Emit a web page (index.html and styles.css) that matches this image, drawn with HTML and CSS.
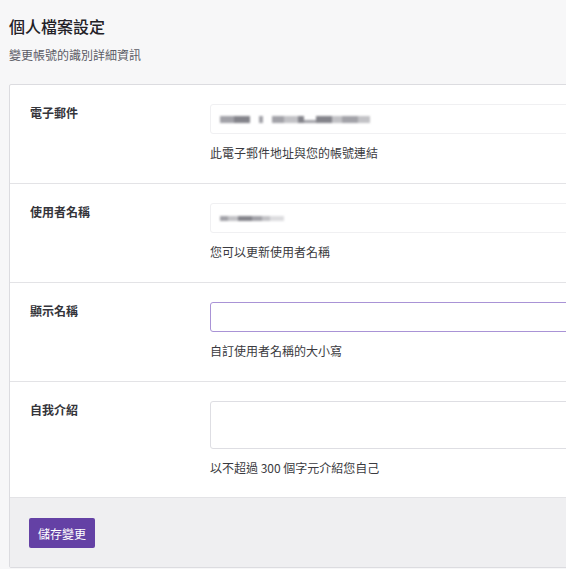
FILE: index.html
```html
<!DOCTYPE html>
<html lang="zh-Hant">
<head>
<meta charset="utf-8">
<title>個人檔案設定</title>
<link rel="stylesheet" href="styles.css">
</head>
<body>
  <main class="page">
    <h1 class="title">個人檔案設定</h1>
    <p class="subtitle">變更帳號的識別詳細資訊</p>

    <section class="card">
      <div class="row">
        <div class="label">電子郵件</div>
        <div class="field">
          <div class="input input-locked">
            <span class="masked">
              <i class="blk w14"></i><i class="blk w16 dark"></i><i class="gap"></i><i class="blk w4"></i><i class="gap"></i><i class="blk w12"></i><i class="blk w14 light"></i><i class="blk w6 dark"></i><i class="blk w12 low"></i><i class="blk w16 dark"></i><i class="blk w10 light"></i><i class="blk w16"></i><i class="blk w12 light"></i>
            </span>
          </div>
          <p class="help">此電子郵件地址與您的帳號連結</p>
        </div>
      </div>

      <div class="row">
        <div class="label">使用者名稱</div>
        <div class="field">
          <div class="input input-locked">
            <span class="masked small">
              <i class="blk w8"></i><i class="blk w10 light"></i><i class="blk w14 dark"></i><i class="blk w10"></i><i class="blk w8 light"></i><i class="blk w14 faint"></i>
            </span>
          </div>
          <p class="help">您可以更新使用者名稱</p>
        </div>
      </div>

      <div class="row">
        <div class="label">顯示名稱</div>
        <div class="field">
          <input class="input input-active" type="text">
          <p class="help">自訂使用者名稱的大小寫</p>
        </div>
      </div>

      <div class="row row-tall">
        <div class="label">自我介紹</div>
        <div class="field">
          <textarea class="input textarea"></textarea>
          <p class="help">以不超過 300 個字元介紹您自己</p>
        </div>
      </div>

      <div class="footer">
        <button class="btn-primary" type="button">儲存變更</button>
      </div>
    </section>
  </main>
</body>
</html>
```

FILE: styles.css
```css
html, body {
  margin: 0;
  padding: 0;
  background: #f7f7f8;
  overflow: hidden;
}

body {
  font-family: "Noto Sans CJK TC", "Noto Sans", "Liberation Sans", sans-serif;
  color: #18181b;
}

.page {
  padding: 14px 0 0 9px;
}

.title {
  margin: 0;
  font-size: 16px;
  line-height: 24px;
  font-weight: 500;
  color: #232127;
}

.subtitle {
  margin: 8px 0 20px;
  font-size: 12px;
  line-height: 18px;
  color: #5c5c66;
}

.card {
  width: 680px;
  background: #fff;
  border: 1px solid #dcdce0;
  border-radius: 2px;
}

.row {
  display: grid;
  grid-template-columns: 180px 1fr;
  padding: 19px 20px 21px;
  border-bottom: 1px solid #e3e3e6;
}

.row-tall {
  padding-bottom: 20px;
}

.label {
  font-size: 12px;
  line-height: 18px;
  font-weight: 700;
  color: #34343a;
}

.field {
  display: flex;
  flex-direction: column;
}

.input {
  box-sizing: border-box;
  display: block;
  width: 100%;
  height: 30px;
  margin: 0;
  padding: 0 9px;
  border: 1px solid #dedee3;
  border-radius: 3px;
  background: #fff;
  font: inherit;
  font-size: 12px;
  outline: none;
}

.input-locked {
  border-color: #f0f0f2;
  display: flex;
  align-items: center;
}

.input-active {
  border-color: #a993d6;
}

.textarea {
  height: 48px;
  resize: none;
}

.masked {
  display: flex;
  align-items: center;
  height: 8px;
  filter: blur(1.2px);
}

.blk {
  display: block;
  height: 7px;
  background: #a2a2a8;
}

.blk.dark { background: #84848b; }
.blk.light { background: #c2c2c6; }
.blk.faint { background: #dcdcdf; }
.blk.low { height: 3px; margin-top: 4px; }

.gap { display: block; width: 9px; }

.w4 { width: 4px; }
.w6 { width: 6px; }
.w8 { width: 8px; }
.w10 { width: 10px; }
.w12 { width: 12px; }
.w14 { width: 14px; }
.w16 { width: 16px; }

.masked.small .blk { height: 5px; }

.help {
  margin: 10px 0 0;
  font-size: 12px;
  line-height: 18px;
  color: #3a3a40;
}

.footer {
  background: #efeff1;
  padding: 20px 19px 19px;
}

.btn-primary {
  display: block;
  width: 66px;
  height: 30px;
  border: 0;
  border-radius: 2px;
  background: #6441a5;
  color: #fff;
  font: inherit;
  font-size: 12px;
  cursor: pointer;
}
```
